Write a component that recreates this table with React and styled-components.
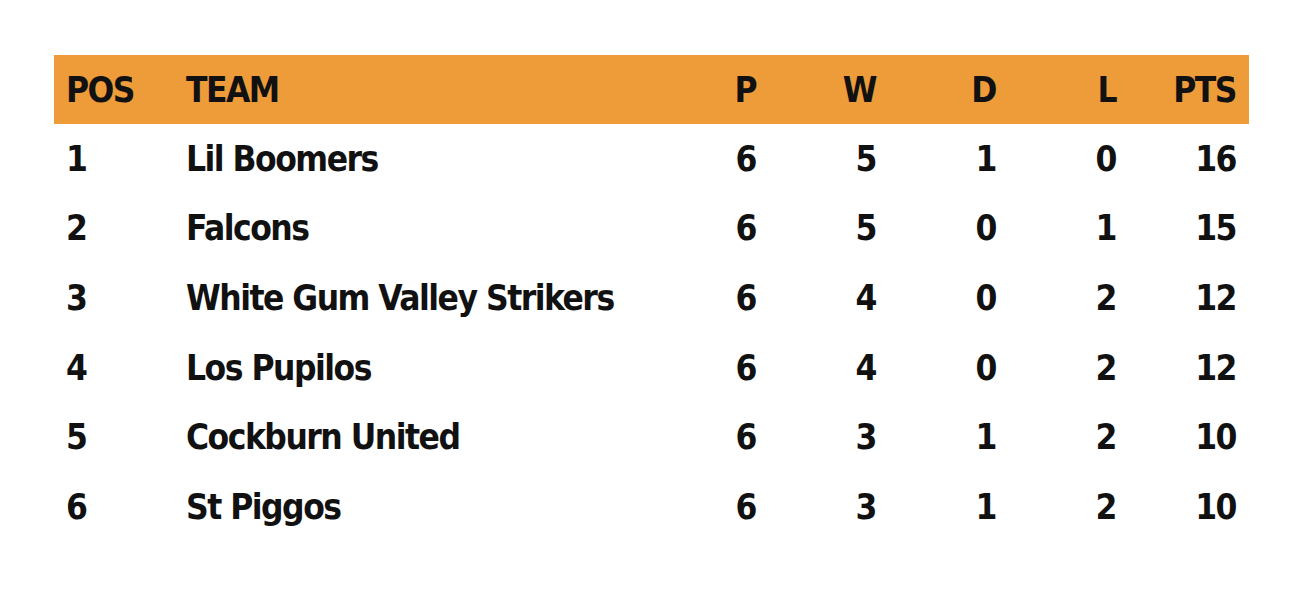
import React from 'react';
import styled, {createGlobalStyle} from 'styled-components';

const GlobalStyle = createGlobalStyle`
  body {
    margin: 0;
    background: #fff;
    font-family: "DejaVu Sans Condensed", "DejaVu Sans", sans-serif;
  }
`;

const Page = styled.div`
  padding: 55px 53px 0 54px;
`;

const Table = styled.div`
  width: 1195px;
`;

const Row = styled.div`
  display: grid;
  grid-template-columns: 120px minmax(0, 1fr) repeat(5, 120px);
  align-items: center;
  height: ${props => props.head ? '69px' : '69.6px'};
  padding: 0 13px 0 12px;
  background: ${props => props.head ? '#ee9b3a' : 'transparent'};
  font-size: 35px;
  font-weight: bold;
  color: #111;
  letter-spacing: -1.5px;
`;

const Cell = styled.div`
  text-align: ${props => props.num ? 'right' : 'left'};
  white-space: nowrap;
`;

const teams = [
  [1, 'Lil Boomers', 6, 5, 1, 0, 16],
  [2, 'Falcons', 6, 5, 0, 1, 15],
  [3, 'White Gum Valley Strikers', 6, 4, 0, 2, 12],
  [4, 'Los Pupilos', 6, 4, 0, 2, 12],
  [5, 'Cockburn United', 6, 3, 1, 2, 10],
  [6, 'St Piggos', 6, 3, 1, 2, 10],
];

const App = () => (
  <Page>
    <GlobalStyle />
    <Table>
      <Row head>
        <Cell>POS</Cell>
        <Cell>TEAM</Cell>
        <Cell num>P</Cell>
        <Cell num>W</Cell>
        <Cell num>D</Cell>
        <Cell num>L</Cell>
        <Cell num>PTS</Cell>
      </Row>
      {teams.map(([pos, name, p, w, d, l, pts]) => (
        <Row key={pos}>
          <Cell>{pos}</Cell>
          <Cell>{name}</Cell>
          <Cell num>{p}</Cell>
          <Cell num>{w}</Cell>
          <Cell num>{d}</Cell>
          <Cell num>{l}</Cell>
          <Cell num>{pts}</Cell>
        </Row>
      ))}
    </Table>
  </Page>
);

export default App;
